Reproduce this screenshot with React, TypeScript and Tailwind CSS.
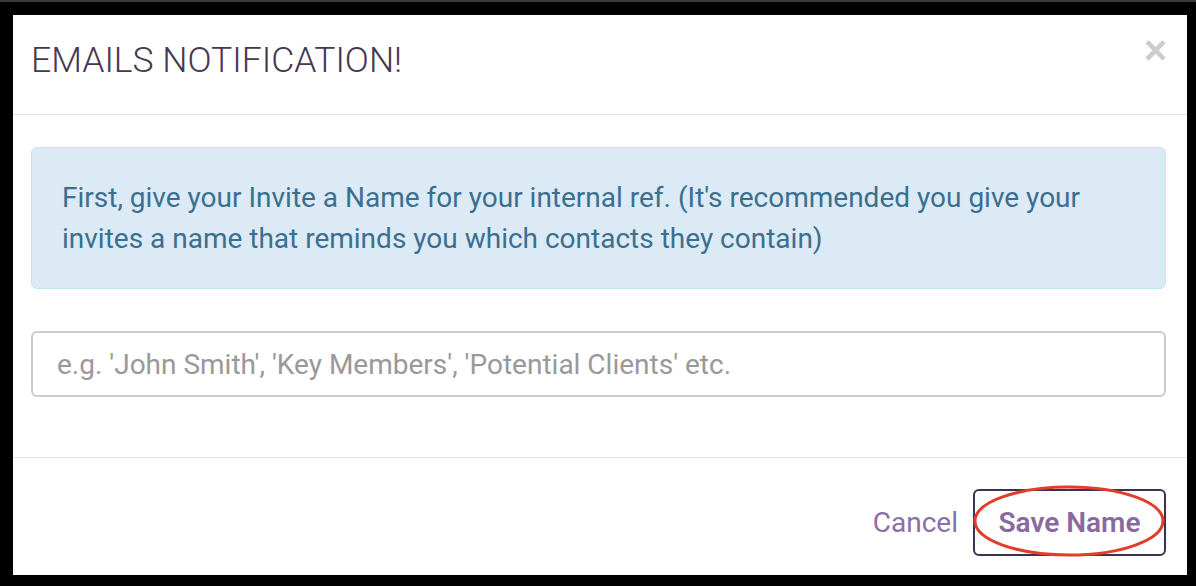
import * as React from "react";

const font = { fontFamily: "Roboto, 'Liberation Sans', sans-serif" };

export default function App() {
  return (
    <div className="w-[1196px] h-[586px] bg-black pt-[13px] pl-[13px] pr-[9px] pb-[11px] border-t-2 border-t-[#3a3a3a]" style={font}>
      <div className="h-full bg-white flex flex-col">
        {/* Header */}
        <div className="h-[100px] shrink-0 border-b border-[#e5e5e5] pl-[18px] pr-[20px] flex items-start justify-between">
          <h4 className="mt-[24px] text-[35.5px] leading-[42px] text-[#45384f] font-light">EMAILS NOTIFICATION!</h4>
          <button className="mt-[9px] text-[40px] leading-[52px] font-bold text-[#cccccc]" style={{ fontFamily: "'Liberation Sans', Arial, sans-serif" }}>×</button>
        </div>

        {/* Body */}
        <div className="flex-1 pl-[18px] pr-[21px] pt-[32px]">
          <div className="border border-[#bce8f1] bg-[#dceaf5] rounded-[6px] px-[30px] py-[29px] text-[28px] leading-[41px] text-[#3a6f8f]">
            First, give your Invite a Name for your internal ref. (It's recommended you give your invites a name that reminds you which contacts they contain)
          </div>
          <input
            className="mt-[42px] w-full h-[66px] border-2 border-[#cccccc] rounded-[6px] px-[24px] text-[28px] text-[#555] placeholder:text-[#999] outline-none"
            placeholder="e.g. 'John Smith', 'Key Members', 'Potential Clients' etc."
          />
        </div>

        {/* Footer */}
        <div className="h-[118px] shrink-0 border-t border-[#e5e5e5] pr-[21px] pt-[31px] flex items-start justify-end gap-[14px]">
          <button className="h-[67px] text-[28px] text-[#8e6ea6] px-[1px]">Cancel</button>
          <div className="relative">
            <button className="h-[67px] w-[193px] border-2 border-[#3d3150] rounded-[6px] text-[28px] font-semibold text-[#8a68a0]">Save Name</button>
            <svg className="absolute -left-[1px] -top-[6px] pointer-events-none" width="196" height="76" viewBox="0 0 196 76">
              <ellipse cx="97" cy="38" rx="94" ry="34" fill="none" stroke="#e23d28" strokeWidth="3" />
            </svg>
          </div>
        </div>
      </div>
    </div>
  );
}
